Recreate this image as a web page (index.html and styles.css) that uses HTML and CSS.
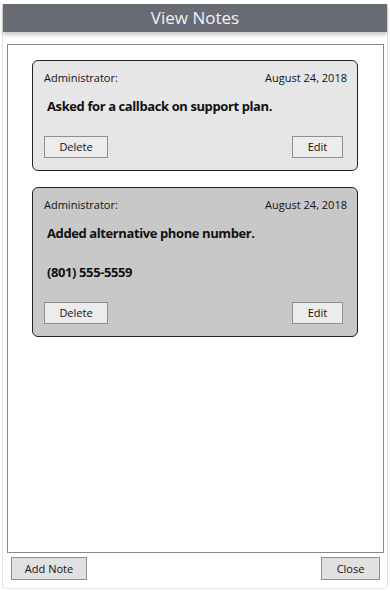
FILE: index.html
```html
<!DOCTYPE html>
<html>
<head>
<meta charset="utf-8">
<link rel="stylesheet" href="styles.css">
</head>
<body>
<div class="window">
  <div class="titlebar">View Notes</div>
  <div class="notes">
    <div class="card">
      <div class="meta"><span>Administrator:</span><span>August 24, 2018</span></div>
      <div class="body">
        <p>Asked for a callback on support plan.</p>
      </div>
      <div class="actions"><button class="btn btn-sm">Delete</button><button class="btn btn-xs">Edit</button></div>
    </div>
    <div class="card card-alt">
      <div class="meta"><span>Administrator:</span><span>August 24, 2018</span></div>
      <div class="body">
        <p>Added alternative phone number.</p>
        <p>(801) 555-5559</p>
      </div>
      <div class="actions"><button class="btn btn-sm">Delete</button><button class="btn btn-xs">Edit</button></div>
    </div>
  </div>
  <div class="footer">
    <button class="btn btn-lg">Add Note</button>
    <button class="btn btn-md">Close</button>
  </div>
</div>
</body>
</html>
```
FILE: styles.css
```css
* { box-sizing: border-box; }
html, body { margin: 0; padding: 0; background: #fff; }
body {
  font-family: "Open Sans", "Noto Sans", sans-serif;
  color: #111;
}
.window {
  margin: 4px 2px 0 2px;
  width: 386px;
  height: 585px;
  border: 1px solid #e2e2e2;
  border-top: none;
  border-radius: 0 0 5px 5px;
  display: flex;
  flex-direction: column;
}
.titlebar {
  height: 28px;
  background: #686b74;
  color: #f2f2f2;
  font-size: 17px;
  line-height: 28px;
  text-align: center;
  box-shadow: 0 3px 4px rgba(0,0,0,0.22);
  position: relative;
}
.notes {
  margin: 12px 3px 0 4px;
  height: 509px;
  border: 1px solid #8a8a8a;
  padding: 15px 25px 0 24px;
  display: flex;
  flex-direction: column;
  gap: 16px;
}
.card {
  border: 1px solid #222;
  border-radius: 6px;
  background: #e6e6e6;
  padding: 9px 10px 12px 11px;
}
.card-alt { background: #c8c8c8; }
.meta {
  display: flex;
  justify-content: space-between;
  font-size: 11px;
  line-height: 16px;
  color: #111;
}
.body {
  padding-left: 3px;
  margin-top: 11px;
}
.body p {
  margin: 0;
  font-size: 13px;
  font-weight: 700;
  line-height: 18px;
  letter-spacing: -0.4px;
}
.body p + p { margin-top: 21px; }
.actions {
  display: flex;
  justify-content: space-between;
  margin-top: 21px;
  padding-right: 4px;
}
.btn {
  font-family: inherit;
  font-size: 11px;
  color: #111;
  background: #e1e1e1;
  border: 1px solid #8f8f8f;
  border-radius: 0;
  padding: 0;
  height: 22px;
  line-height: 20px;
}
.card .btn { background: #ececec; }
.btn-sm { width: 64px; }
.btn-xs { width: 51px; }
.footer {
  display: flex;
  justify-content: space-between;
  padding: 4px 7px 0 8px;
}
.btn-lg { width: 76px; height: 23px; }
.btn-md { width: 59px; height: 23px; }
```
